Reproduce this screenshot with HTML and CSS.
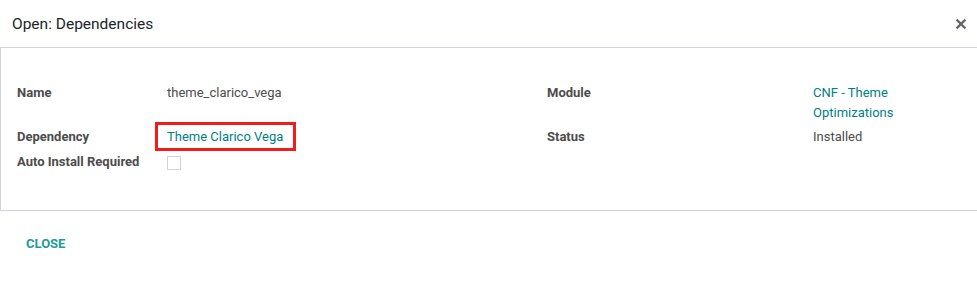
FILE: index.html
```html
<!DOCTYPE html>
<html lang="en">
<head>
  <meta charset="UTF-8" />
  <title>Open: Dependencies</title>
  <link rel="stylesheet" href="styles.css">
</head>
<body>
  <div class="modal">
    <header class="modal-header">
      <h4 class="modal-title">Open: Dependencies</h4>
      <button class="close" aria-label="Close">
        <svg width="10" height="10" viewBox="0 0 10 10">
          <path d="M1.5 1.5 L8.5 8.5 M8.5 1.5 L1.5 8.5" stroke="#666" stroke-width="2.4" stroke-linecap="square" />
        </svg>
      </button>
    </header>

    <div class="modal-body">
      <div class="form-grid">
        <!-- Row 1 -->
        <div class="label">Name</div>
        <div class="value">theme_clarico_vega</div>
        <div class="label">Module</div>
        <div class="value"><a href="#" class="link">CNF - Theme<br>Optimizations</a></div>

        <!-- Row 2 -->
        <div class="label">Dependency</div>
        <div class="value"><a href="#" class="link highlight">Theme Clarico Vega</a></div>
        <div class="label">Status</div>
        <div class="value">Installed</div>

        <!-- Row 3 -->
        <div class="label last">Auto Install Required</div>
        <div class="value last"><span class="checkbox"></span></div>
      </div>
    </div>

    <footer class="modal-footer">
      <button class="btn-close">Close</button>
    </footer>
  </div>
</body>
</html>
```

FILE: styles.css
```css
body {
  margin: 0;
  font-family: Roboto, "Liberation Sans", sans-serif;
  background-color: #fff;
  color: #4c4c4c;
}

.modal-header {
  display: flex;
  align-items: center;
  justify-content: space-between;
  height: 47px;
  padding: 0 11px 0 12px;
  border-bottom: 1px solid #ced4da;
}

.modal-title {
  margin: 0;
  font-size: 15.5px;
  font-weight: normal;
  color: #212529;
}

.close {
  border: none;
  background: none;
  padding: 0;
  display: flex;
  cursor: pointer;
}

.modal-body {
  border-left: 1px solid #ced4da;
  border-bottom: 1px solid #ced4da;
  padding: 35px 0 34px 16px;
}

.form-grid {
  display: grid;
  grid-template-columns: 150px 380px 266px 1fr;
  row-gap: 4px;
  font-size: 13px;
  line-height: 20px;
}

.label {
  font-weight: bold;
  color: #4c4c4c;
}

.value {
  color: #4c4c4c;
}

.last {
  margin-top: 1px;
}

.link {
  color: #017e84;
  text-decoration: none;
}

.highlight {
  position: relative;
}

.highlight::after {
  content: "";
  position: absolute;
  left: -12px;
  right: -13px;
  top: -7px;
  bottom: -7px;
  border: 3px solid #f21c1c;
}

.checkbox {
  display: inline-block;
  width: 12px;
  height: 12px;
  margin-top: 4px;
  border: 1px solid #d4d4d4;
  background-color: #fff;
}

.modal-footer {
  padding: 22px 26px;
}

.btn-close {
  border: none;
  background: none;
  padding: 0;
  font-family: inherit;
  font-size: 13px;
  font-weight: bold;
  text-transform: uppercase;
  color: #1a9c99;
  cursor: pointer;
}
```
